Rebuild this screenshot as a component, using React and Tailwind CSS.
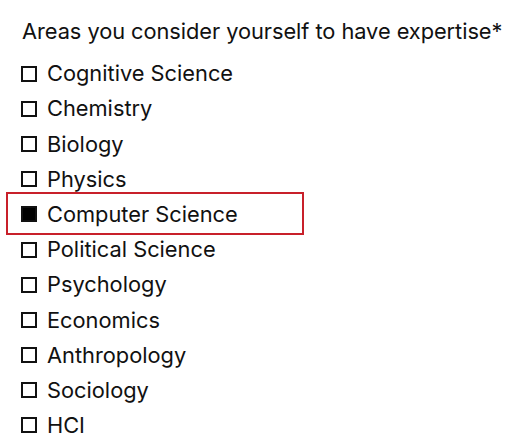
const areas = [
  { name: 'Cognitive Science' },
  { name: 'Chemistry' },
  { name: 'Biology' },
  { name: 'Physics' },
  { name: 'Computer Science', checked: true, highlight: true },
  { name: 'Political Science' },
  { name: 'Psychology' },
  { name: 'Economics' },
  { name: 'Anthropology' },
  { name: 'Sociology' },
  { name: 'HCI' },
];

function Box({ checked }) {
  return (
    <span
      className={`inline-block w-[16px] h-[16px] border-2 border-[#111] shrink-0 ${checked ? 'bg-black' : 'bg-white'}`}
    />
  );
}

export default function App() {
  return (
    <div className="w-[517px] h-[446px] bg-white text-[#111] pt-[17px] pl-[21px] font-['Inter',sans-serif] overflow-hidden">
      <h1 className="text-[21.8px] leading-[28px] font-normal tracking-[-0.05px] pl-px">
        Areas you consider yourself to have expertise*
      </h1>
      <ul className="mt-[11px] flex flex-col">
        {areas.map((a) => (
          <li key={a.name} className="relative h-[35.2px] flex items-center gap-[10px] text-[21.8px]">
            {a.highlight && (
              <span className="absolute left-[-15px] top-[-5px] w-[298px] h-[43px] border-2 border-[#c8202a]" />
            )}
            <Box checked={a.checked} />
            <span>{a.name}</span>
          </li>
        ))}
      </ul>
    </div>
  );
}
